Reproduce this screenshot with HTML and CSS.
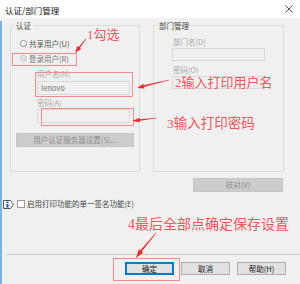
FILE: index.html
```html
<!DOCTYPE html>
<html lang="zh-CN">
<head>
  <meta charset="UTF-8">
  <title>认证/部门管理</title>
  <link rel="stylesheet" href="styles.css">
</head>
<body>

<div class="dialog">
  <div class="titlebar">
    <span class="title">认证/部门管理</span>
    <svg class="close" width="8" height="8" viewBox="0 0 8 8">
      <path d="M0.5 0.5L7.5 7.5M7.5 0.5L0.5 7.5" stroke="#444" stroke-width="0.9"/>
    </svg>
  </div>

  <div class="panel">
    <div class="main">
      <div class="groups">
        <fieldset class="group">
          <legend>认证</legend>
          <div class="radios">
            <div class="radio-row"><span class="radio"></span>共享用户(U)</div>
            <div class="radio-row off"><span class="radio checked"></span>登录用户(R)</div>
          </div>
          <div class="field-label">用户名(N)</div>
          <div class="field">lenovo</div>
          <div class="field-label">密码(A)</div>
          <div class="field pwd"></div>
          <div class="btn-flat wide">用户认证服务器设置(S)...</div>
        </fieldset>

        <fieldset class="group dept">
          <legend>部门管理</legend>
          <div class="field-label first">部门名(D)</div>
          <div class="field short"></div>
          <div class="field-label">密码(O)</div>
          <div class="field short"></div>
        </fieldset>
      </div>

      <div class="verify">
        <div class="btn-flat check">核对(V)</div>
      </div>
    </div>

    <div class="sign">
      <svg class="info" width="11" height="9" viewBox="0 0 11 9">
        <path d="M0.5 0.5H7.5L10.5 4.5L7.5 8.5H0.5Z" fill="#fff" stroke="#555" stroke-width="1"/>
        <rect x="3.5" y="1.5" width="2" height="1.5" fill="#1f4fd8"/>
        <rect x="3.5" y="3.8" width="2" height="3.8" fill="#1f4fd8"/>
      </svg>
      <span class="checkbox"></span>
      <span class="sign-text">启用打印功能的单一签名功能(E)</span>
    </div>

    <div class="footer">
      <div class="separator"></div>
      <div class="buttons">
        <div class="btn default">确定</div>
        <div class="btn">取消</div>
        <div class="btn">帮助(H)</div>
      </div>
    </div>
  </div>

  <!-- annotations -->
  <div class="mark box-radio"></div>
  <div class="mark box-user"></div>
  <div class="mark box-pwd"></div>
  <div class="mark box-ok"></div>

  <div class="note note1">1勾选</div>
  <div class="note note2">2输入打印用户名</div>
  <div class="note note3">3输入打印密码</div>
  <div class="note note4">4最后全部点确定保存设置</div>

  <svg class="arrows" width="300" height="284" viewBox="0 0 300 284">
    <polygon points="86.2,39.2 79.9,48.0 81.3,49.0 75,53 77.3,46.0 78.7,47.0 85.8,38.8"/>
    <polygon points="169.1,80.3 144.0,87.0 144.4,88.5 137,88 143.2,83.7 143.6,85.2 168.9,79.7"/>
    <polygon points="157.0,118.3 140.0,120.8 140.2,122.2 132,121 139.6,117.8 139.8,119.2 157.0,117.7"/>
    <polygon points="156.2,233.2 141.8,251.4 143.3,252.6 136,258 138.9,249.0 140.4,250.2 155.8,232.8"/>
  </svg>
</div>

</body>
</html>
```

FILE: styles.css
```css
body { margin: 0; background: #f0f0f0; font-family: "Noto Sans CJK SC", sans-serif; font-size: 7.5px; color: #333; }

.dialog { position: relative; width: 300px; height: 284px; overflow: hidden; background: #f0f0f0; }

.titlebar {
  height: 18px;
  background: #fff;
  display: flex;
  align-items: center;
  justify-content: space-between;
  padding: 0 7px 0 5px;
}
.title { font-size: 8.5px; color: #111; line-height: 18px; padding-top: 1px; }

.panel {
  height: 266px;
  box-sizing: border-box;
  border-left: 2px solid #78b4ec;
  border-bottom: 2px solid #78b4ec;
}

.main { padding: 0 16px 0 8px; }
.groups {
  display: grid;
  grid-template-columns: 130px 131px;
  column-gap: 13px;
  margin-top: 3px;
}
.group {
  margin: 0;
  padding: 0;
  min-width: 0;
  height: 151px;
  box-sizing: border-box;
  border: 1px solid #dcdcdc;
}
.group legend {
  margin-left: 3px;
  padding: 0 2px;
  line-height: 9px;
  color: #444;
}

.radios { padding: 6px 0 0 9px; }
.radio-row { display: flex; align-items: center; line-height: 15px; color: #555; }
.radio-row.off { color: #777; }
.radio {
  width: 7px;
  height: 7px;
  box-sizing: border-box;
  border: 1px solid #8a8a8a;
  border-radius: 50%;
  background: #fff;
  margin-right: 2px;
  position: relative;
}
.radio.checked { border-color: #bdbdbd; background: #f3f3f3; }
.radio.checked::after {
  content: "";
  position: absolute;
  left: 1.5px;
  top: 1.5px;
  width: 2px;
  height: 2px;
  border-radius: 50%;
  background: #b0b0b0;
}

.field-label { margin: 3px 0 0 26px; line-height: 10px; color: #a8a8a8; }
.field {
  margin: 2px 0 0 26px;
  width: 93px;
  height: 14px;
  box-sizing: border-box;
  border: 1px solid #d9d9d9;
  background: #f0f0f0;
  padding-left: 3px;
  line-height: 12px;
  color: #6d6d6d;
}
.field.pwd { margin-top: 1px; }

.dept .field-label { margin-left: 19px; margin-top: 4px; }
.dept .field-label.first { margin-top: 7px; }
.field.short { margin: 1px 0 0 18px; height: 13px; }

.btn-flat {
  height: 14px;
  box-sizing: border-box;
  background: #cccccc;
  border: 1px solid #c4c4c4;
  color: #8c8c8c;
  text-align: center;
  line-height: 12px;
}
.btn-flat.wide { margin: 10px 0 0 5px; width: 118px; }

.verify { display: flex; justify-content: flex-end; margin-top: 6px; }
.btn-flat.check { width: 90px; margin-right: 1px; }

.sign {
  display: flex;
  align-items: center;
  margin-top: 6px;
  padding-left: 1px;
  height: 12px;
}
.checkbox {
  width: 8px;
  height: 8px;
  box-sizing: border-box;
  border: 1px solid #9a9a9a;
  background: #fff;
  margin: 0 2px 0 3px;
}
.sign-text { color: #444; line-height: 12px; }

.footer { margin-top: 44px; }
.separator { height: 1px; background: #c6c6c6; margin: 0 0 0 5px; }
.buttons {
  display: flex;
  justify-content: flex-end;
  gap: 7px;
  margin-top: 7px;
  padding-right: 14px;
}
.btn {
  width: 49px;
  height: 13px;
  box-sizing: border-box;
  background: #e1e1e1;
  border: 1px solid #adadad;
  text-align: center;
  line-height: 11px;
  color: #111;
}
.btn.default { border-color: #0078d7; box-shadow: inset 0 0 0 1px #0078d7; }

/* annotations over the dialog */
.mark { position: absolute; border: 1px solid #f08c8c; box-sizing: border-box; }
.box-radio { left: 12px; top: 53px; width: 65px; height: 13px; }
.box-user { left: 35px; top: 72px; width: 98px; height: 25px; }
.box-pwd { left: 41px; top: 108px; width: 93px; height: 18px; }
.box-ok { left: 113px; top: 258px; width: 67px; height: 23px; }

.note {
  position: absolute;
  font-family: "Liberation Serif", "Noto Sans CJK SC", serif;
  color: #f4555a;
  font-size: 13px;
  line-height: 13px;
  white-space: nowrap;
}
.note1 { left: 87px; top: 28px; }
.note2 { left: 175px; top: 76px; }
.note3 { left: 167px; top: 117px; font-size: 13.5px; }
.note4 { left: 128px; top: 218px; font-size: 14px; }

.arrows { position: absolute; left: 0; top: 0; pointer-events: none; }
.arrows polygon { fill: #ec2e2e; }
```
